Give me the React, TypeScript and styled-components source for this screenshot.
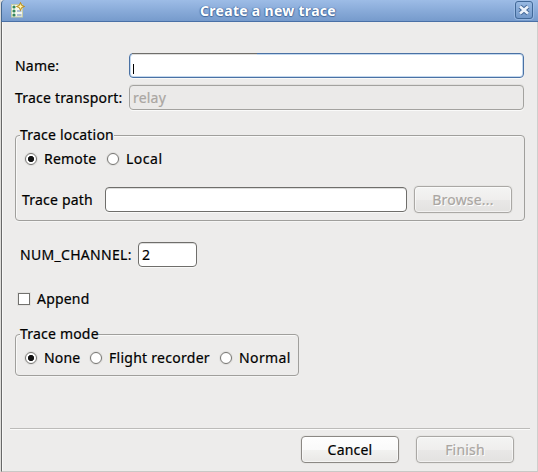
import React from 'react';
import styled, { createGlobalStyle, css } from 'styled-components';

const GlobalStyle = createGlobalStyle`
  * { box-sizing: border-box; }
  body { margin: 0; background: #edecea; overflow: hidden; }
`;

const Dialog = styled.div`
  width: 538px;
  height: 472px;
  display: flex;
  flex-direction: column;
  background: #edeceb;
  border-left: 1px solid #deddda;
  font-family: 'Noto Sans', sans-serif;
  font-size: 14px;
  color: #000;
  -webkit-text-stroke: 0.2px currentColor;
`;

const TitleBar = styled.header`
  flex: none;
  height: 22px;
  display: grid;
  grid-template-columns: 32px 1fr 22px;
  align-items: center;
  padding-left: 8px;
  border-left: 1px solid #456890;
  border-bottom: 1px solid #4a70a6;
  border-top-left-radius: 4px;
  background: linear-gradient(#9dbce6, #89abd9 50%, #769bcc);
`;

const Title = styled.h1`
  margin: 0;
  padding-right: 22px;
  text-align: center;
  font-size: 14px;
  line-height: 20px;
  font-weight: 700;
  letter-spacing: 0.3px;
  color: #fff;
  text-shadow: 0 1px 1px #45699c, 1px 0 1px #5379ad, -1px 0 1px #5379ad;
  -webkit-text-stroke: 0;
`;

const Content = styled.main`
  flex: 1;
  display: flex;
  flex-direction: column;
  align-items: flex-start;
  border-left: 1px solid #686868;
  border-right: 1px solid #cfcecc;
  border-bottom: 1px solid #c9c8c6;
  padding-left: 13px;
  box-shadow: inset 1px 0 #f8f8f7;
`;

const Row = styled.div<{ $top?: number; $indent?: number }>`
  display: flex;
  align-items: center;
  margin-top: ${(p) => p.$top ?? 0}px;
  padding-left: ${(p) => p.$indent ?? 0}px;
`;

const Text = styled.span<{ $w: number; $ls?: number }>`
  display: inline-block;
  flex: none;
  width: ${(p) => p.$w}px;
  line-height: 18px;
  white-space: nowrap;
  letter-spacing: ${(p) => p.$ls ?? 0.2}px;
`;

const Field = styled.div<{ $w: number; $focus?: boolean; $disabled?: boolean }>`
  width: ${(p) => p.$w}px;
  height: 25px;
  flex: none;
  display: flex;
  align-items: center;
  padding-left: 3px;
  border: 1px solid #6f6e6b;
  border-radius: 4px;
  background: #fff;
  box-shadow: 0 1px #f9f9f8, inset 0 1px #dededd;
  ${(p) => p.$focus && css`
    position: relative;
    border-color: #4a71a4;
    box-shadow: 0 1px #f9f9f8, inset 0 0 0 1px #c3d8ee;
    &::before {
      content: '';
      position: absolute;
      top: -1px;
      left: 2px;
      width: 125px;
      height: 2px;
      background: linear-gradient(#6f6e6b 50%, #dededd 50%);
    }
  `}
  ${(p) => p.$disabled && css`
    border-color: #a3a29f;
    background: #ebeae9;
    color: #aaa6a2;
    box-shadow: 0 1px #fafaf9, 0 -1px #e1e0de;
  `}
`;

const Caret = styled.span`
  width: 1px;
  height: 10px;
  margin-top: 7px;
  background: #000;
`;

const Group = styled.section<{ $w: number; $h: number; $top: number }>`
  display: flex;
  flex-direction: column;
  align-items: flex-start;
  width: ${(p) => p.$w}px;
  height: ${(p) => p.$h}px;
  margin-top: ${(p) => p.$top}px;
  border: 1px solid #a09f9c;
  border-radius: 4px;
  box-shadow: inset 1px 1px #f9f9f8, 0 1px #f5f5f4;
`;

const Legend = styled.div`
  height: 18px;
  margin: -10px 0 0 4px;
  background: #edeceb;
  line-height: 18px;
`;

const Radio = styled.span<{ $on?: boolean }>`
  flex: none;
  width: 12px;
  height: 12px;
  border: 1px solid #777673;
  border-radius: 50%;
  background: ${(p) => (p.$on ? 'radial-gradient(circle at 5px 5px, #111 0 2.5px, #222 2.8px, #fff 3.5px)' : '#fff')};
  box-shadow: 0 0 0 1px #e0dfdd;
`;

const Gap = styled.span<{ $w: number }>`
  flex: none;
  width: ${(p) => p.$w}px;
`;

const Check = styled.span`
  width: 12px;
  height: 12px;
  border: 1px solid #72716e;
  background: #fff;
  box-shadow: 0 0 0 1px #e3e2e0;
`;

const Button = styled.button`
  width: 98px;
  height: 27px;
  padding: 0;
  border: 1px solid #8b8884;
  border-radius: 4px;
  background: linear-gradient(#fefefe, #fafafa 50%, #f2f2f0 52%, #e9e8e6);
  box-shadow: 0 0 0 1px #e6e5e3, inset 0 0 0 1px #fff8;
  font: inherit;
  line-height: 18px;
  letter-spacing: 0.2px;
  color: #000;
  &:disabled {
    border-color: #aaa8a5;
    background: linear-gradient(#f4f4f3, #efeeed 50%, #e9e8e7 52%, #e3e2e0);
    color: #aaa6a2;
    text-shadow: 1px 1px #fff;
  }
`;

const Separator = styled.div`
  width: 520px;
  height: 2px;
  margin: 52px 0 0 -5px;
  background: linear-gradient(#bcbbb9 50%, #fbfbfa 50%);
`;

const CloseButton = styled.div`
  width: 18px;
  height: 18px;
  margin-left: -1px;
  margin-top: -1px;
  display: grid;
  place-items: center;
  border: 1px solid #416897;
  border-radius: 3px;
  background: linear-gradient(#98b9e2, #7399ca);
  box-shadow: 0 0 0 1px #a4c1e8aa;
`;

const Icon = styled.svg`
  display: block;
  margin-top: -2px;
`;

const WizardIcon = () => (
  <Icon width="15" height="17" viewBox="0 0 15 17">
    <rect x="1.5" y="3.5" width="11" height="12.5" fill="#f4f8ec" stroke="#c6cda9" />
    <g fill="#35875b">
      <circle cx="4" cy="6" r="1.6" /><circle cx="4" cy="10" r="1.6" /><circle cx="4" cy="14" r="1.6" />
    </g>
    <path d="M7 10h4.500M7 14h4.500" stroke="#6481bd" strokeWidth="1.2" />
    <path d="M10.500 1.500l1.100 2.900 2.900 1.100-2.900 1.100-1.100 2.900-1.100-2.900-2.900-1.100 2.900-1.100z" fill="#fff6b2" stroke="#b98713" />
  </Icon>
);

const CloseIcon = () => (
  <svg width="12" height="12" viewBox="0 0 12 12" fill="none">
    <path d="M2 2.500l8 7M10 2.500l-8 7" stroke="#436797" strokeWidth="4.500" />
    <path d="M2 2.500l8 7M10 2.500l-8 7" stroke="#edf3fb" strokeWidth="2.700" />
  </svg>
);

export default function App() {
  return (
    <>
      <GlobalStyle />
      <Dialog>
        <TitleBar>
          <WizardIcon />
          <Title>Create a new trace</Title>
          <CloseButton><CloseIcon /></CloseButton>
        </TitleBar>
        <Content>
          <Row $top={31}>
            <Text $w={114}>Name:</Text>
            <Field $w={395} $focus><Caret /></Field>
          </Row>
          <Row $top={7}>
            <Text $w={114}>Trace transport:</Text>
            <Field $w={395} $disabled><Text $w={40}>relay</Text></Field>
          </Row>
          <Group $w={510} $h={86} $top={25}>
            <Legend><Text $w={94}>Trace location</Text></Legend>
            <Row $top={6} $indent={9}>
              <Radio $on /><Gap $w={7} />
              <Text $w={63}>Remote</Text>
              <Radio /><Gap $w={7} />
              <Text $w={40} $ls={0.5}>Local</Text>
            </Row>
            <Row $top={18} $indent={6}>
              <Text $w={83}>Trace path</Text>
              <Field $w={302} />
              <Gap $w={7} />
              <Button disabled>Browse...</Button>
            </Row>
          </Group>
          <Row $top={21} $indent={5}>
            <Text $w={118} $ls={0.3}>NUM_CHANNEL:</Text>
            <Field $w={59}><Text $w={12}>2</Text></Field>
          </Row>
          <Row $top={23} $indent={3}>
            <Check /><Gap $w={7} />
            <Text $w={60}>Append</Text>
          </Row>
          <Group $w={284} $h={42} $top={26}>
            <Legend><Text $w={78}>Trace mode</Text></Legend>
            <Row $top={6} $indent={9}>
              <Radio $on /><Gap $w={7} />
              <Text $w={46}>None</Text>
              <Radio /><Gap $w={7} />
              <Text $w={111} $ls={0.27}>Flight recorder</Text>
              <Radio /><Gap $w={7} />
              <Text $w={52} $ls={0.4}>Normal</Text>
            </Row>
          </Group>
          <Separator />
          <Row $top={6} $indent={286}>
            <Button>Cancel</Button>
            <Gap $w={17} />
            <Button disabled>Finish</Button>
          </Row>
        </Content>
      </Dialog>
    </>
  );
}
